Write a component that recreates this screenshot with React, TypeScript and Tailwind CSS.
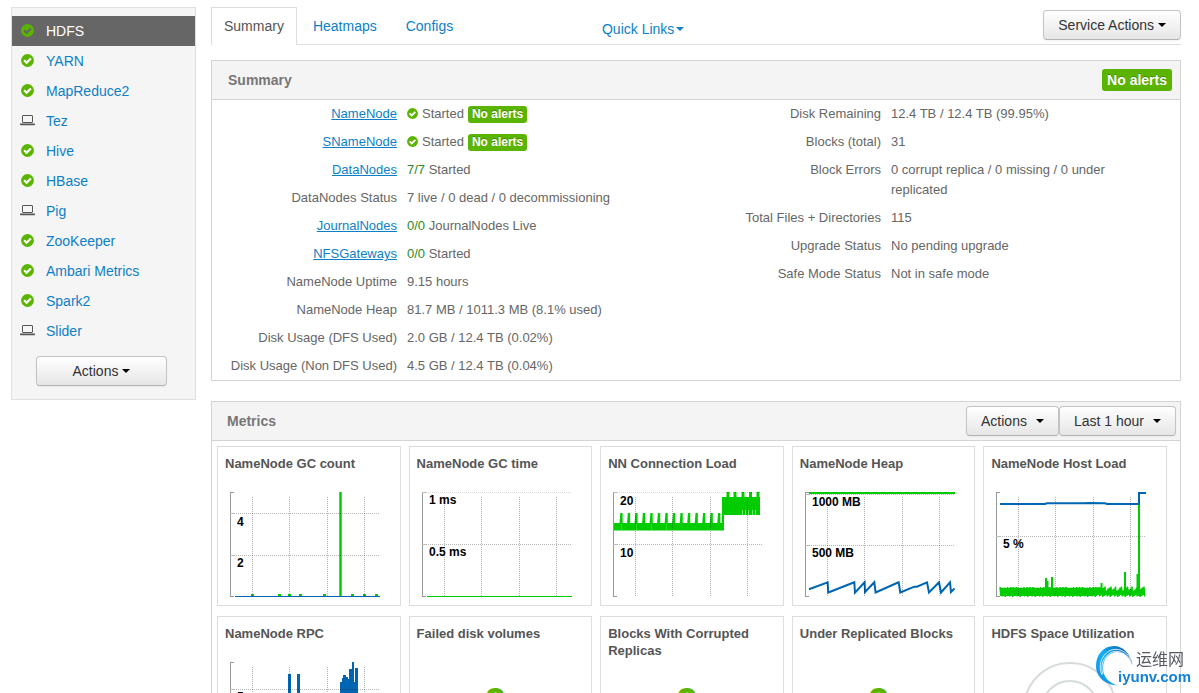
import type { ReactNode } from "react";

type Health = "ok" | "client";

const services: { name: string; health: Health }[] = [
  { name: "HDFS", health: "ok" },
  { name: "YARN", health: "ok" },
  { name: "MapReduce2", health: "ok" },
  { name: "Tez", health: "client" },
  { name: "Hive", health: "ok" },
  { name: "HBase", health: "ok" },
  { name: "Pig", health: "client" },
  { name: "ZooKeeper", health: "ok" },
  { name: "Ambari Metrics", health: "ok" },
  { name: "Spark2", health: "ok" },
  { name: "Slider", health: "client" },
];

const GREEN = "#00cc00";
const BLUE = "#0066b3";

function CheckIcon({ className, mark = "#fff" }: { className: string; mark?: string }) {
  return (
    <svg viewBox="0 0 13 13" className={className} aria-hidden="true">
      <circle cx="6.5" cy="6.5" r="6.4" fill="#5ab400" />
      <path d="M3.1 6.3 5.6 8.8 9.9 4.5" fill="none" stroke={mark} strokeWidth="2.2" />
    </svg>
  );
}

function LaptopIcon() {
  return (
    <svg viewBox="0 0 15 11" className="-ml-px h-[11px] w-[15px]" aria-hidden="true">
      <rect x="2.5" y="0.5" width="10" height="7" rx="0.5" fill="none" stroke="#555" />
      <path d="M0 8.6h15v0.8c0 .4-.4.8-.8.8H.8c-.4 0-.8-.4-.8-.8z" fill="#555" />
    </svg>
  );
}

function Caret({ className = "" }: { className?: string }) {
  return (
    <span
      aria-hidden="true"
      className={`inline-block h-0 w-0 border-x-4 border-t-4 border-x-transparent ${className}`}
    />
  );
}

function DropButton({ children, className = "", wide = false }: { children: ReactNode; className?: string; wide?: boolean }) {
  return (
    <button
      type="button"
      className={`flex h-[30px] items-center justify-center whitespace-nowrap rounded-[4px] border border-[#c4c4c4] border-b-[#b3b3b3] bg-linear-to-b from-white to-[#e6e6e6] px-[14px] text-[14px] leading-5 text-[#333] shadow-[inset_0_1px_0_rgba(255,255,255,0.2),0_1px_2px_rgba(0,0,0,0.05)] ${wide ? "gap-[9px]" : "gap-1"} ${className}`}
    >
      {children}
      <Caret className="border-t-black" />
    </button>
  );
}

function AlertBadge() {
  return (
    <span className="inline-block rounded-[3px] bg-[#5ab400] px-1 text-[12px] font-bold leading-[17px] text-white [text-shadow:0_-1px_0_rgba(0,0,0,0.25)]">
      No alerts
    </span>
  );
}

function Row({ label, link = false, children }: { label: string; link?: boolean; children: ReactNode }) {
  return (
    <div className="flex gap-[10px] py-1 leading-5">
      <dt className="w-[185px] shrink-0 whitespace-nowrap text-right">
        {link ? (
          <a href="#component" className="text-[#0d7fc7] underline">
            {label}
          </a>
        ) : (
          label
        )}
      </dt>
      <dd className="min-w-0">{children}</dd>
    </div>
  );
}

function Started() {
  return (
    <span className="flex h-5 items-center gap-1">
      <CheckIcon className="mb-px h-[11px] w-[11px]" />
      Started
      <AlertBadge />
    </span>
  );
}

function Ratio({ value }: { value: string }) {
  return <span className="text-[#2b8a2b]">{value}</span>;
}

interface ChartProps {
  lines: number[];
  labels: [string, number][];
  children: ReactNode;
}

function Chart({ lines, labels, children }: ChartProps) {
  return (
    <svg className="block h-[112px] w-full" aria-hidden="true">
      {children}
      <g stroke="#000" strokeOpacity="0.3" strokeDasharray="1 1" shapeRendering="crispEdges">
        {[27.5, 64.5, 102.5, 139.5].map((x) => (
          <line key={x} x1={x} x2={x} y1="8" y2="107" />
        ))}
        {lines.map((y) => (
          <line key={y} x1="5" x2="155" y1={y} y2={y} strokeOpacity={y < 4 ? 0.16 : 0.28} />
        ))}
      </g>
      <g stroke="#999" fill="none" shapeRendering="crispEdges">
        <path d="M9 3.5H5.5V107.5H9" />
        {lines.map((y) => (
          <line key={y} x1="5" x2="9" y1={y} y2={y} stroke="#bbb" />
        ))}
      </g>
      {labels.map(([text, y]) => (
        <text key={text} x="12" y={y} fontSize="12" fontWeight="bold" fill="#000">
          {text}
        </text>
      ))}
    </svg>
  );
}

function GcCount() {
  return (
    <Chart lines={[24.5, 66.5]} labels={[["4", 37], ["2", 78]]}>
      <g fill={GREEN}>
        {[27, 54, 64, 75, 99, 127, 139, 151].map((x) => (
          <rect key={x} x={x - 1} y="105" width="3" height="2" />
        ))}
        <rect x="114" y="3" width="3" height="104" opacity="0.75" />
        <rect x="115" y="3" width="1" height="104" />
      </g>
      <rect x="10" y="107" width="145" height="1" fill={BLUE} />
    </Chart>
  );
}

function GcTime() {
  return (
    <Chart lines={[3.5, 55.5]} labels={[["1 ms", 15], ["0.5 ms", 67]]}>
      <rect x="10" y="107" width="145" height="1" fill={GREEN} />
    </Chart>
  );
}

function ConnectionLoad() {
  const low = Array.from({ length: 14 }, (_, i) => 13.3 + i * 7.52);
  return (
    <Chart lines={[3.5, 55.5]} labels={[["20", 16], ["10", 68]]}>
      <g fill={GREEN}>
        <path d="M6 34H114V8H152V26H116V41.5H6Z" />
        {low.map((x) => (
          <path key={x} d={`M${x - 1.8} 34.5 L${x - 1} 24 H${x + 1.3} V34.5Z`} />
        ))}
        {[120, 127, 135, 142.5, 150].map((x) => (
          <path key={x} d={`M${x - 1.5} 9 V3 H${x + 1.5} V9Z`} />
        ))}
      </g>
      <g stroke="#fff" strokeOpacity="0.45">
        {[134.5, 137.5, 140.5, 144.5, 147.5].map((x) => (
          <line key={x} x1={x} x2={x} y1="21" y2="26" />
        ))}
        {[13.5, 28.5, 43.5, 58.5].map((x) => (
          <line key={x} x1={x} x2={x} y1="35" y2="41" strokeOpacity="0.2" />
        ))}
      </g>
    </Chart>
  );
}

function Heap() {
  return (
    <Chart lines={[5.5, 56.5]} labels={[["1000 MB", 17], ["500 MB", 68]]}>
      <rect x="9" y="3" width="146" height="2" fill={GREEN} />
      <polyline
        points="9,100.3 27.6,93.3 28.3,103.5 54.3,93.3 55,103.7 64.6,93.3 65,103 74.3,93.3 75.6,103.5 98.6,93.3 100.3,103.5 114.3,97.7 117,97.7 127,93.3 129,103.5 139,93.3 141,103.5 150,93.3 151,103 154.5,99.5"
        fill="none"
        stroke={BLUE}
        strokeWidth="2"
      />
    </Chart>
  );
}

function HostLoad() {
  const noise = Array.from({ length: 97 }, (_, i) => {
    const x = 9 + i * 1.5;
    const jitter = (i * 37) % 11;
    const top = x > 112 ? 97.5 + (jitter % 5) : 98 + (jitter % 3) * 0.5;
    const bottom = 106 + ((i * 23) % 5) * 0.5;
    return `${x},${top.toFixed(1)} ${(x + 0.7).toFixed(1)},${bottom}`;
  }).join(" ");
  return (
    <Chart lines={[47.5]} labels={[["5 %", 59]]}>
      <rect x="9" y="99" width="93" height="8" fill={GREEN} />
      <rect x="102" y="102" width="52" height="4" fill={GREEN} />
      <g fill="none" stroke={GREEN}>
        <polyline points={noise} strokeWidth="1.4" />
        <path
          d="M55 104V89M56.5 104V92M61 104V88M110.5 104V94M134 104V83M146.5 104V85M148 107V15"
          strokeWidth="2"
        />
      </g>
      <polyline
        points="9,15 54,15 56,14.3 92,14.3 98,14 114,14.3 116,15 148,15 148,4 155,4"
        fill="none"
        stroke={BLUE}
        strokeWidth="2"
      />
    </Chart>
  );
}

function Rpc() {
  return (
    <Chart lines={[30.5]} labels={[["5", 42]]}>
      <g fill={BLUE}>
        <rect x="63" y="15" width="3" height="92" />
        <rect x="72" y="15" width="3" height="92" />
        <path d="M115 107V23H117V19H118V16H121V18H123V20H124V10H127V3H129V23H130V9H133V107Z" />
      </g>
    </Chart>
  );
}

function Zero() {
  return <div className="pr-[10px] text-center text-[42px] font-bold leading-[88px] text-[#5ab400]">0</div>;
}

function SpaceRing() {
  return (
    <svg className="block h-[112px] w-full" aria-hidden="true">
      <g fill="#fff" stroke="#d6dbdb" strokeWidth="2">
        <circle cx="79" cy="50" r="46" />
        <circle cx="79" cy="50" r="28" />
      </g>
    </svg>
  );
}

const widgets: { title: string; body: ReactNode }[] = [
  { title: "NameNode GC count", body: <GcCount /> },
  { title: "NameNode GC time", body: <GcTime /> },
  { title: "NN Connection Load", body: <ConnectionLoad /> },
  { title: "NameNode Heap", body: <Heap /> },
  { title: "NameNode Host Load", body: <HostLoad /> },
  { title: "NameNode RPC", body: <Rpc /> },
  { title: "Failed disk volumes", body: <Zero /> },
  { title: "Blocks With Corrupted Replicas", body: <Zero /> },
  { title: "Under Replicated Blocks", body: <Zero /> },
  { title: "HDFS Space Utilization", body: <SpaceRing /> },
];

function Sidebar() {
  return (
    <nav aria-label="Services" className="w-[185px] shrink-0 border border-[#e0e0e0] bg-[#f5f5f5] pb-[13px] pt-2">
      <ul>
        {services.map((s, i) => (
          <li key={s.name}>
            <a
              href="#service"
              className={`flex h-[30px] items-center pl-[9px] text-[14px] leading-5 ${i === 0 ? "bg-[#666] text-white" : "text-[#0d7fc7]"}`}
            >
              <span className="flex w-[25px] shrink-0 pb-[2px]">
                {s.health === "ok" ? (
                  <CheckIcon className="h-[13px] w-[13px]" mark={i === 0 ? "#666" : "#fff"} />
                ) : (
                  <LaptopIcon />
                )}
              </span>
              {s.name}
            </a>
          </li>
        ))}
      </ul>
      <div className="mt-[10px] pl-6 pr-7">
        <DropButton className="w-full">Actions</DropButton>
      </div>
    </nav>
  );
}

function Watermark() {
  return (
    <div className="fixed bottom-0 right-0 h-[50px] w-[103px]">
      <svg viewBox="0 0 40 42" className="absolute left-0 top-[3px] h-[42px] w-10" aria-hidden="true">
        <defs>
          <linearGradient id="swoosh" x1="0" y1="1" x2="1" y2="0">
            <stop offset="0" stopColor="#1590e0" />
            <stop offset="0.5" stopColor="#14aef5" />
            <stop offset="1" stopColor="#0a4f9e" />
          </linearGradient>
        </defs>
        <path
          d="M36.5 19C35 8 27 0 18 0 7 0 0 9 0 20c0 11 9 19 22 19.500C13 37 7 31 7 22 7 13 13 6 21 6c7 0 12 5 15.500 13z"
          fill="url(#swoosh)"
        />
        <path d="M35 14C30 4 21 1 13 5 5 10 2 20 6 29" fill="none" stroke="#fff" strokeWidth="0.8" />
        <path d="M35.500 16.500C30 6 21 3 14 7 7 12 4 20 7 28" fill="none" stroke="#fff" strokeWidth="0.8" />
      </svg>
      <div className="absolute left-10 top-[5px] font-['Noto_Sans_CJK_SC',sans-serif] text-[16px] leading-5 text-[#555a60]">
        运维网
      </div>
      <div className="absolute left-[22px] top-6 text-[15px] font-bold leading-5 text-[#1482d8]">iyunv.com</div>
    </div>
  );
}

export default function App() {
  return (
    <div className="flex h-screen items-start gap-[15px] overflow-hidden bg-white pl-[11px] pr-[18px] pt-[7px] font-['Liberation_Sans',Arial,sans-serif] text-[13px] text-[#666]">
      <Sidebar />
      <main className="min-w-0 flex-1">
        <div className="flex h-[38px] items-start border-b border-[#ddd] text-[14px] leading-5">
          <a href="#summary" className="mr-[3px] h-[38px] border border-b-0 border-[#ddd] bg-white px-3 pt-2 text-[#555]">
            Summary
          </a>
          <a href="#heatmaps" className="mr-[3px] px-[13px] pt-[9px] text-[#0d7fc7]">
            Heatmaps
          </a>
          <a href="#configs" className="px-[13px] pt-[9px] text-[#0d7fc7]">
            Configs
          </a>
          <a href="#links" className="ml-[14%] mt-3 flex items-center text-[#0d7fc7]">
            Quick Links
            <Caret className="ml-[2px] border-t-[#0d7fc7]" />
          </a>
          <DropButton className="ml-auto mt-[3px]">Service Actions</DropButton>
        </div>

        <section className="mt-[15px] border border-[#d4d4d4]">
          <header className="flex h-[39px] items-center justify-between border-b border-[#d4d4d4] bg-[#f4f4f4] pl-4 pr-2">
            <h2 className="text-[14px] font-bold text-[#777]">Summary</h2>
            <span className="rounded-[3px] bg-[#5ab400] px-[5px] text-[14px] font-bold leading-[22px] text-white [text-shadow:0_-1px_0_rgba(0,0,0,0.25)]">
              No alerts
            </span>
          </header>
          <div className="grid grid-cols-2">
            <dl>
              <Row label="NameNode" link>
                <Started />
              </Row>
              <Row label="SNameNode" link>
                <Started />
              </Row>
              <Row label="DataNodes" link>
                <Ratio value="7/7" /> Started
              </Row>
              <Row label="DataNodes Status">7 live / 0 dead / 0 decommissioning</Row>
              <Row label="JournalNodes" link>
                <Ratio value="0/0" /> JournalNodes Live
              </Row>
              <Row label="NFSGateways" link>
                <Ratio value="0/0" /> Started
              </Row>
              <Row label="NameNode Uptime">9.15 hours</Row>
              <Row label="NameNode Heap">81.7 MB / 1011.3 MB (8.1% used)</Row>
              <Row label="Disk Usage (DFS Used)">2.0 GB / 12.4 TB (0.02%)</Row>
              <Row label="Disk Usage (Non DFS Used)">4.5 GB / 12.4 TB (0.04%)</Row>
            </dl>
            <dl className="pr-8">
              <Row label="Disk Remaining">12.4 TB / 12.4 TB (99.95%)</Row>
              <Row label="Blocks (total)">31</Row>
              <Row label="Block Errors">0 corrupt replica / 0 missing / 0 under replicated</Row>
              <Row label="Total Files + Directories">115</Row>
              <Row label="Upgrade Status">No pending upgrade</Row>
              <Row label="Safe Mode Status">Not in safe mode</Row>
            </dl>
          </div>
        </section>

        <section className="mt-5 border border-[#d4d4d4]">
          <header className="flex h-[39px] items-center border-b border-[#d4d4d4] bg-[#f4f4f4] pl-[15px] pr-1">
            <h2 className="mr-auto text-[14px] font-bold text-[#777]">Metrics</h2>
            <DropButton wide>Actions</DropButton>
            <DropButton wide>Last 1 hour</DropButton>
          </header>
          <div className="grid grid-cols-5 gap-x-2 gap-y-[10px] pb-3 pl-[5px] pr-[13px] pt-[5px]">
            {widgets.map((w) => (
              <article key={w.title} className="h-[160px] min-w-0 border border-[#ddd] px-[7px] pt-2">
                <h3 className="h-[34px] pr-2 text-[13px] font-bold leading-[17px] text-[#555]">{w.title}</h3>
                {w.body}
              </article>
            ))}
          </div>
        </section>
      </main>
      <Watermark />
    </div>
  );
}
